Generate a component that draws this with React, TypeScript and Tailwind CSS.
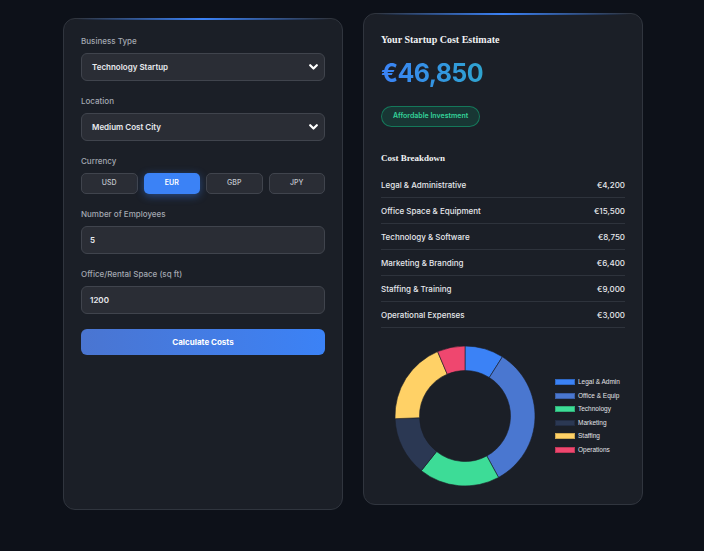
import React from 'react';

const breakdown = [
  { label: 'Legal & Administrative', short: 'Legal & Admin', value: 4200, color: '#3b82f6' },
  { label: 'Office Space & Equipment', short: 'Office & Equip', value: 15500, color: '#4a77d0' },
  { label: 'Technology & Software', short: 'Technology', value: 8750, color: '#3ddc97' },
  { label: 'Marketing & Branding', short: 'Marketing', value: 6400, color: '#2b3853' },
  { label: 'Staffing & Training', short: 'Staffing', value: 9000, color: '#ffd166' },
  { label: 'Operational Expenses', short: 'Operations', value: 3000, color: '#ef476f' },
];

const fmt = (n: number) => '€' + n.toLocaleString('en-US');

const Chevron = () => (
  <svg width="9" height="6" viewBox="0 0 9 6" className="shrink-0">
    <path d="M1.2 1.2 L4.5 4.5 L7.8 1.2" fill="none" stroke="#ffffff" strokeWidth="2.2" strokeLinecap="round" strokeLinejoin="round" />
  </svg>
);

const Label: React.FC<{ children: React.ReactNode }> = ({ children }) => (
  <div className="text-[8px] leading-[10px] font-medium text-[#a3a8b1] mb-[7px]">{children}</div>
);

const SelectBox: React.FC<{ value: string }> = ({ value }) => (
  <div className="h-[28px] rounded-[6px] bg-[#2a2d35] border border-[#40444d] flex items-center justify-between pl-[10px] pr-[6px]">
    <span className="text-[8px] font-semibold text-[#e8eaee]">{value}</span>
    <Chevron />
  </div>
);

const InputBox: React.FC<{ value: string }> = ({ value }) => (
  <div className="h-[28px] rounded-[6px] bg-[#2a2d35] border border-[#40444d] flex items-center pl-[8px]">
    <span className="text-[8px] font-semibold text-[#e8eaee]">{value}</span>
  </div>
);

function arcPath(cx: number, cy: number, r: number, ri: number, a0: number, a1: number) {
  const p = (rad: number, a: number) => [cx + rad * Math.cos(a), cy + rad * Math.sin(a)];
  const large = a1 - a0 > Math.PI ? 1 : 0;
  const [x0, y0] = p(r, a0);
  const [x1, y1] = p(r, a1);
  const [x2, y2] = p(ri, a1);
  const [x3, y3] = p(ri, a0);
  return `M${x0} ${y0} A${r} ${r} 0 ${large} 1 ${x1} ${y1} L${x2} ${y2} A${ri} ${ri} 0 ${large} 0 ${x3} ${y3} Z`;
}

const Donut = () => {
  const total = breakdown.reduce((s, b) => s + b.value, 0);
  let start = -Math.PI / 2;
  return (
    <svg width="142" height="142" viewBox="0 0 142 142">
      {breakdown.map((b) => {
        const end = start + (b.value / total) * Math.PI * 2;
        const d = arcPath(71, 71, 70, 45.5, start, end);
        start = end;
        return <path key={b.label} d={d} fill={b.color} stroke="#1b1f27" strokeWidth="0.6" />;
      })}
    </svg>
  );
};

export default function App() {
  const total = breakdown.reduce((s, b) => s + b.value, 0);
  return (
    <div
      className="min-h-[551px] bg-[#0d1119] pt-[18px] pl-[2px] flex justify-center"
      style={{ fontFamily: 'Inter, "Liberation Sans", sans-serif' }}
    >
      <div className="grid grid-cols-2 gap-[20px] w-[580px] items-stretch self-start">
        {/* form card */}
        <div className="relative rounded-[12px] bg-[#1b1f27] border border-[#30353e] p-[17px]">
          <div className="absolute top-[-1px] left-[12px] right-[12px] h-[2px] bg-gradient-to-r from-transparent via-[#3b82f6] to-transparent" />
          <Label>Business Type</Label>
          <SelectBox value="Technology Startup" />
          <div className="mt-[15px]">
            <Label>Location</Label>
            <SelectBox value="Medium Cost City" />
          </div>
          <div className="mt-[15px]">
            <Label>Currency</Label>
            <div className="grid grid-cols-4 gap-[6px]">
              {['USD', 'EUR', 'GBP', 'JPY'].map((c) =>
                c === 'EUR' ? (
                  <div key={c} className="h-[21px] rounded-[5px] bg-[#3b82f6] flex items-center justify-center text-[7px] font-semibold text-white shadow-[0_2px_8px_rgba(59,130,246,0.45)]">
                    {c}
                  </div>
                ) : (
                  <div key={c} className="h-[21px] rounded-[5px] bg-[#2a2d35] border border-[#40444d] flex items-center justify-center text-[7px] font-medium text-[#c4c8cf]">
                    {c}
                  </div>
                )
              )}
            </div>
          </div>
          <div className="mt-[15px]">
            <Label>Number of Employees</Label>
            <InputBox value="5" />
          </div>
          <div className="mt-[15px]">
            <Label>Office/Rental Space (sq ft)</Label>
            <InputBox value="1200" />
          </div>
          <button className="mt-[15px] w-full h-[26px] rounded-[6px] bg-gradient-to-r from-[#4a75d1] to-[#3b82f6] text-white text-[8px] font-bold">
            Calculate Costs
          </button>
        </div>

        {/* results card */}
        <div className="relative -translate-y-[5px] rounded-[12px] bg-[#1b1f27] border border-[#30353e] p-[17px]">
          <div className="absolute top-[-1px] left-[12px] right-[12px] h-[2px] bg-gradient-to-r from-transparent via-[#3b82f6] to-transparent" />
          <h2
            className="text-[10px] leading-[18px] font-bold text-[#f1f2f4]"
            style={{ fontFamily: '"Liberation Serif", "DejaVu Serif", serif' }}
          >
            Your Startup Cost Estimate
          </h2>
          <div className="mt-[8px] text-[25px] leading-[32px] font-bold tracking-tight bg-gradient-to-r from-[#3b82f6] to-[#2fa3cf] bg-clip-text text-transparent w-max">
            {fmt(total)}
          </div>
          <div className="mt-[17px] inline-flex h-[21px] items-center px-[11px] rounded-full bg-[#10b981]/15 border border-[#10b981]/50 text-[7px] font-semibold text-[#34d399]">
            Affordable Investment
          </div>
          <h3
            className="mt-[24px] text-[9px] leading-[14px] font-bold text-[#f1f2f4]"
            style={{ fontFamily: '"Liberation Serif", "DejaVu Serif", serif' }}
          >
            Cost Breakdown
          </h3>
          <div className="mt-[7px]">
            {breakdown.map((b) => (
              <div key={b.label} className="h-[26px] flex items-center justify-between border-b border-[#2e333c] text-[8px] font-medium text-[#e6e8ec]">
                <span>{b.label}</span>
                <span>{fmt(b.value)}</span>
              </div>
            ))}
          </div>
          <div className="mt-[17px] h-[142px] flex items-center">
            <div className="w-[167px] flex justify-center">
              <Donut />
            </div>
            <div className="pl-[7px] flex flex-col gap-[6px]" style={{ fontFamily: '"Liberation Sans", Arial, sans-serif' }}>
              {breakdown.map((b) => (
                <div key={b.short} className="flex items-center gap-[3px] h-[7.5px]">
                  <span className="w-[20px] h-[6px] border border-black/20" style={{ backgroundColor: b.color }} />
                  <span className="text-[6.5px] text-[#e2e4e8] whitespace-nowrap">{b.short}</span>
                </div>
              ))}
            </div>
          </div>
        </div>
      </div>
    </div>
  );
}
